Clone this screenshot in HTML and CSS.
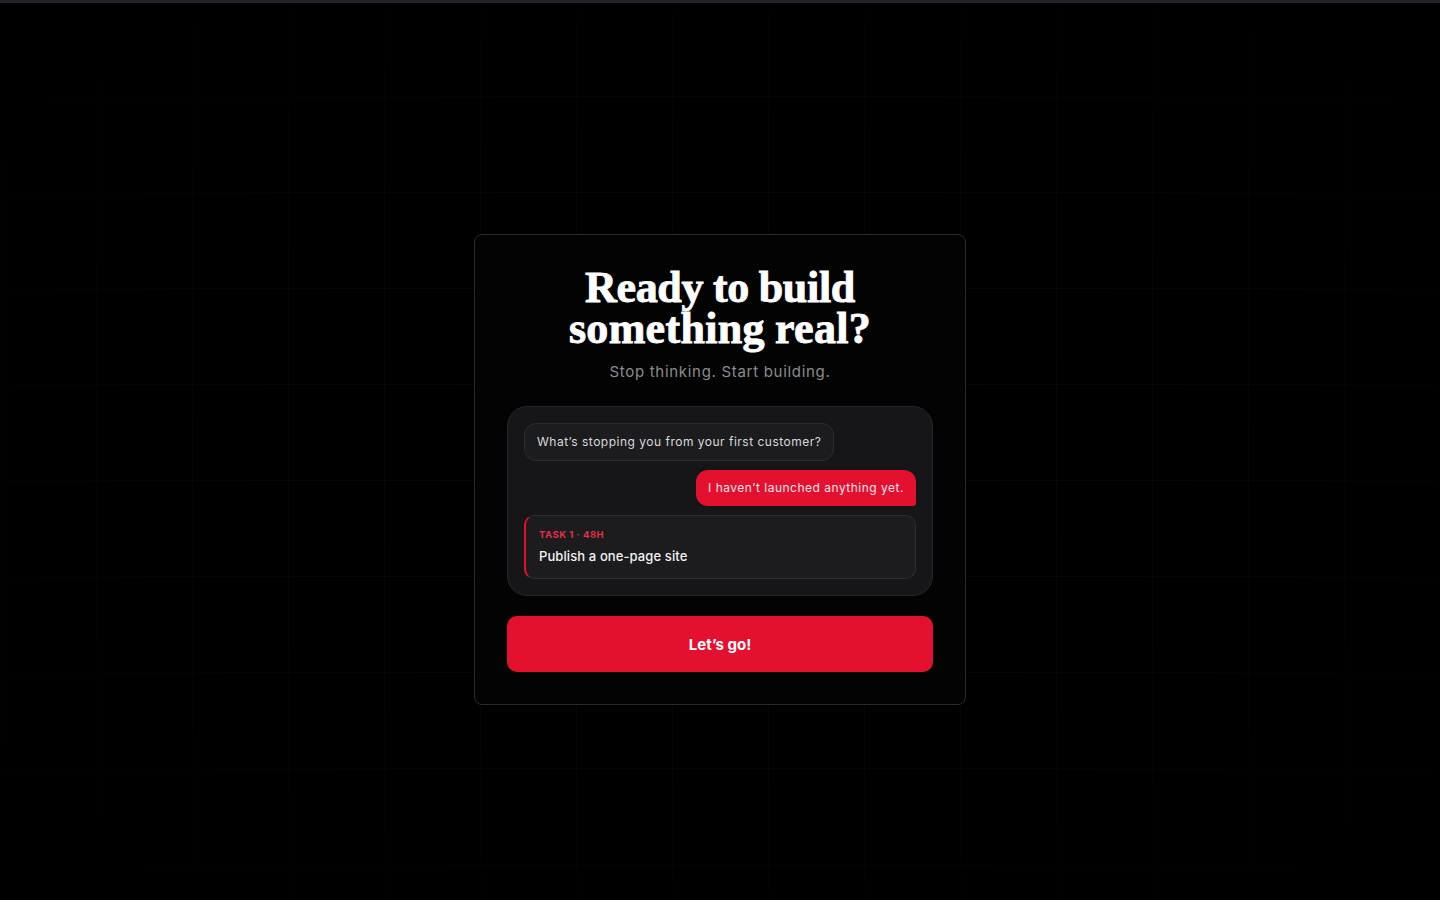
FILE: index.html
```html
<!DOCTYPE html>
<html lang="en">
<head>
<meta charset="utf-8">
<title>Ready to build something real?</title>
<link rel="stylesheet" href="styles.css">
</head>
<body>
<div class="topbar"></div>
<main class="stage">
  <section class="card">
    <h1 class="title"><span class="line">Ready to build</span><span class="line line-wide">something real?</span></h1>
    <p class="subtitle">Stop thinking. Start building.</p>
    <div class="chat">
      <div class="bubble bubble-in">What’s stopping you from your first customer?</div>
      <div class="bubble bubble-out">I haven’t launched anything yet.</div>
      <div class="task">
        <div class="task-label">TASK 1 · 48H</div>
        <div class="task-title">Publish a one-page site</div>
      </div>
    </div>
    <button class="cta" type="button">Let’s go!</button>
  </section>
</main>
</body>
</html>
```

FILE: styles.css
```css
* { box-sizing: border-box; }
html, body { margin: 0; padding: 0; }
body {
  min-height: 100vh;
  background-color: #000;
  background-image:
    radial-gradient(ellipse 62% 62% at 50% 50%, rgba(0,0,0,0) 0%, rgba(0,0,0,0.6) 60%, #000 100%),
    linear-gradient(to right, rgba(255,255,255,0.045) 1px, transparent 1px),
    linear-gradient(to bottom, rgba(255,255,255,0.045) 1px, transparent 1px);
  background-size: 100% 100%, 96px 96px, 96px 96px;
  background-position: 0 0, 0 0, 0 0;
  font-family: Inter, "Noto Sans", sans-serif;
  color: #fff;
}
.topbar {
  height: 3px;
  background: #222327;
}
.stage {
  display: flex;
  flex-direction: column;
  align-items: center;
  padding-top: 231px;
}
.card {
  width: 492px;
  background: #030303;
  border: 1px solid #2a2a2e;
  border-radius: 8px;
  padding: 32px;
  display: flex;
  flex-direction: column;
  align-items: stretch;
}
.title {
  margin: 0;
  display: flex;
  flex-direction: column;
  align-items: center;
  font-family: "Liberation Serif", "DejaVu Serif", serif;
  font-weight: 700;
  font-size: 44px;
  line-height: 41px;
  letter-spacing: -0.3px;
  word-spacing: -1px;
  color: #fff;
  -webkit-text-stroke: 0.9px #fff;
}
.line { display: block; white-space: nowrap; }
.line-wide { letter-spacing: 0.3px; }
.subtitle {
  margin: 13px 0 0;
  text-align: center;
  font-size: 15px;
  line-height: 20px;
  letter-spacing: 0.7px;
  color: #8b8b8f;
}
.chat {
  margin-top: 24px;
  background: #161618;
  border: 1px solid #26262a;
  border-radius: 20px;
  padding: 16px;
  display: flex;
  flex-direction: column;
  gap: 9px;
}
.bubble {
  font-size: 12px;
  line-height: 16px;
  letter-spacing: 0.5px;
  border-radius: 12px;
}
.bubble-in {
  align-self: flex-start;
  background: #1c1c1f;
  border: 1px solid #2c2c30;
  color: #d9d9dc;
  padding: 10px 12px;
}
.bubble-out {
  align-self: flex-end;
  background: #e31030;
  color: #f6e6e9;
  padding: 10px 12px;
  border-radius: 12px 12px 3px 12px;
}
.task {
  background: #1c1c1f;
  border: 1px solid #2c2c30;
  border-left: 2px solid #e31030;
  border-radius: 10px;
  padding: 13px 14px 13px 13px;
}
.task-label {
  font-size: 9.5px;
  line-height: 12px;
  font-weight: 700;
  letter-spacing: 0.5px;
  color: #e0304a;
}
.task-title {
  margin-top: 6px;
  font-size: 13px;
  line-height: 18px;
  font-weight: 500;
  letter-spacing: 0.1px;
  color: #f2f2f2;
}
.cta {
  margin-top: 20px;
  height: 56px;
  border: none;
  border-radius: 10px;
  background: #e31030;
  color: #fff;
  font-family: Inter, "Noto Sans", sans-serif;
  font-size: 15px;
  font-weight: 700;
  cursor: pointer;
}
```
